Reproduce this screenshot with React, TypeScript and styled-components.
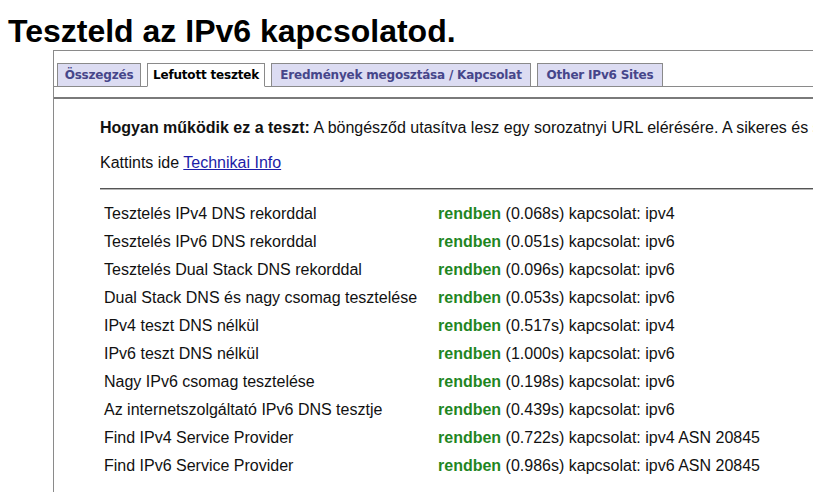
import React from "react";
import styled, { createGlobalStyle } from "styled-components";

const Global = createGlobalStyle`
  html, body { margin: 0; padding: 0; background: #fff; overflow: hidden; }
  body { padding: 8px; font-family: "Liberation Sans", Arial, sans-serif; color: #111; }
`;

const Title = styled.h1`
  margin: 5px 0 0;
  font-size: 32px;
  font-weight: bold;
  line-height: normal;
  color: #000;
  white-space: nowrap;
`;

const Panel = styled.div`
  margin-left: 45px;
  width: 1300px;
  border: 1px solid #8a8a8a;
  border-bottom: none;
  min-height: 442px;
`;

const TabStrip = styled.ul`
  list-style: none;
  margin: 12px 0 0;
  padding: 0 0 0 3px;
  display: flex;
  gap: 6px;
  border-bottom: 1px solid #8a8a8a;
  height: 23px;
`;

const Tab = styled.li<{ $active?: boolean; $w: number }>`
  box-sizing: border-box;
  height: ${(p) => (p.$active ? "24px" : "23px")};
  width: ${(p) => p.$w}px;
  display: flex;
  align-items: center;
  justify-content: center;
  border: 1px solid #8a8a8a;
  border-bottom: ${(p) => (p.$active ? "1px solid #fff" : "none")};
  background: ${(p) => (p.$active ? "#fff" : "#dcdcf2")};
  color: ${(p) => (p.$active ? "#000" : "#46468a")};
  font-family: "DejaVu Sans", Verdana, sans-serif;
  font-weight: bold;
  font-size: 12px;
  white-space: nowrap;
  letter-spacing: -0.2px;
`;

const Rule = styled.div`
  margin-top: 10px;
  border-top: 2px solid #7a7a7a;
`;

const Content = styled.div`
  padding: 20px 0 0 46px;
  font-size: 16px;
`;

const Intro = styled.p`
  margin: 0;
  line-height: normal;
  white-space: nowrap;
`;

const Line = styled.p`
  margin: 17px 0 0;
  line-height: normal;
`;

const Link = styled.a`
  color: #1c1ca8;
  text-decoration: underline;
`;

const Divider = styled.div`
  margin-top: 16px;
  border-top: 1px solid #555;
  border-bottom: 1px solid #b5b5b5;
`;

const Results = styled.div`
  margin-top: 10px;
  display: flex;
  flex-direction: column;
`;

const Row = styled.div`
  display: grid;
  grid-template-columns: 334px auto;
  height: 28px;
  align-items: center;
  padding-left: 4px;
  white-space: nowrap;
`;

const Ok = styled.b`
  color: #1f861f;
`;

const tabs = [
  { label: "Összegzés", w: 84 },
  { label: "Lefutott tesztek", w: 118, active: true },
  { label: "Eredmények megosztása / Kapcsolat", w: 260 },
  { label: "Other IPv6 Sites", w: 126 },
];

const rows: [string, string, string][] = [
  ["Tesztelés IPv4 DNS rekorddal", "0.068s", "ipv4"],
  ["Tesztelés IPv6 DNS rekorddal", "0.051s", "ipv6"],
  ["Tesztelés Dual Stack DNS rekorddal", "0.096s", "ipv6"],
  ["Dual Stack DNS és nagy csomag tesztelése", "0.053s", "ipv6"],
  ["IPv4 teszt DNS nélkül", "0.517s", "ipv4"],
  ["IPv6 teszt DNS nélkül", "1.000s", "ipv6"],
  ["Nagy IPv6 csomag tesztelése", "0.198s", "ipv6"],
  ["Az internetszolgáltató IPv6 DNS tesztje", "0.439s", "ipv6"],
  ["Find IPv4 Service Provider", "0.722s", "ipv4 ASN 20845"],
  ["Find IPv6 Service Provider", "0.986s", "ipv6 ASN 20845"],
];

export default function App() {
  return (
    <>
      <Global />
      <Title>Teszteld az IPv6 kapcsolatod.</Title>
      <Panel>
        <TabStrip>
          {tabs.map((t) => (
            <Tab key={t.label} $active={t.active} $w={t.w}>
              {t.label}
            </Tab>
          ))}
        </TabStrip>
        <Rule />
        <Content>
          <Intro>
            <b>Hogyan működik ez a teszt:</b> A böngésződ utasítva lesz egy sorozatnyi URL elérésére. A sikeres és sikertelen kapcsolódások alapján kiderül, hogy mennyire vagy felkészülve.
          </Intro>
          <Line>
            Kattints ide <Link href="#">Technikai Info</Link>
          </Line>
          <Divider />
          <Results>
            {rows.map(([name, time, conn]) => (
              <Row key={name}>
                <span>{name}</span>
                <span>
                  <Ok>rendben</Ok> ({time}) kapcsolat: {conn}
                </span>
              </Row>
            ))}
          </Results>
        </Content>
      </Panel>
    </>
  );
}
